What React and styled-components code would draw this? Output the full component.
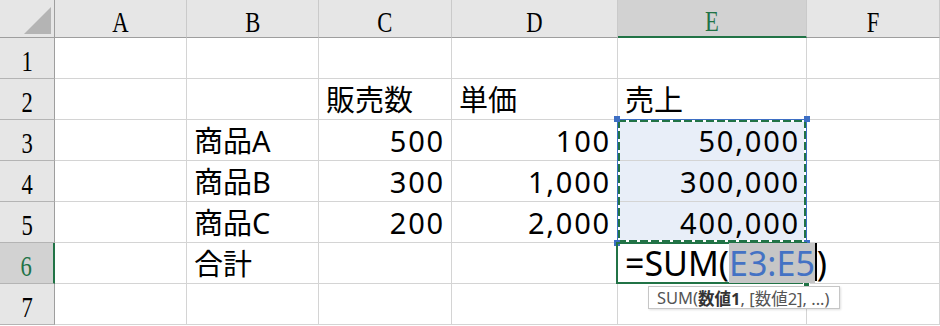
import React from "react";
import styled, { createGlobalStyle } from "styled-components";

const GlobalStyle = createGlobalStyle`
  html, body {
    margin: 0;
    padding: 0;
    background: #ffffff;
  }
  body {
    overflow: hidden;
  }
`;

const GREEN = "#217346";
const BLUE = "#3e6fc4";
const GRID = "#d4d4d4";
const CELL_FONT = `"Noto Sans", "Noto Sans CJK JP", sans-serif`;

const Sheet = styled.div`
  display: grid;
  grid-template-columns: 55px 132px 132px 133px 166px 189px 1fr;
  grid-template-rows: 38px repeat(7, 41px);
  width: 940px;
  height: 326px;
  overflow: hidden;
  background: #ffffff;
`;

// every grid item gets its own row/column so the overlays don't push cells around
const HeaderBase = styled.div`
  grid-row: ${(p) => p.$row};
  grid-column: ${(p) => p.$col};
  box-sizing: border-box;
  display: flex;
  justify-content: center;
  align-items: flex-end;
  font-family: "Liberation Serif", "Times New Roman", serif;
  font-size: 29px;
  line-height: 29px;
  background: ${(p) => (p.$selected ? "#d2d2d2" : "#e6e6e6")};
  color: ${(p) => (p.$selected ? GREEN : "#000000")};
`;

const Corner = styled(HeaderBase)`
  border-right: 1px solid #9e9e9e;
  border-bottom: 1px solid #9e9e9e;
  align-items: stretch;
`;

const ColHeader = styled(HeaderBase)`
  border-right: 1px solid #cacaca;
  border-bottom: ${(p) => (p.$selected ? `2px solid ${GREEN}` : "1px solid #9e9e9e")};
`;

const RowHeader = styled(HeaderBase)`
  padding-bottom: 2px;
  border-bottom: 1px solid #b4b4b4;
  border-right: ${(p) => (p.$selected ? `2px solid ${GREEN}` : "1px solid #9e9e9e")};
`;

const Glyph = styled.span`
  display: inline-block;
  transform: scaleX(0.78);
`;

const Cell = styled.div`
  grid-row: ${(p) => p.$row};
  grid-column: ${(p) => p.$col};
  box-sizing: border-box;
  display: flex;
  align-items: flex-end;
  justify-content: ${(p) => (p.$numeric ? "flex-end" : "flex-start")};
  padding: 0 ${(p) => (p.$numeric ? "6px" : "8px")} 5px 7px;
  border-right: 1px solid ${GRID};
  border-bottom: 1px solid ${GRID};
  background: ${(p) => (p.$inRange ? "#e8eef8" : "#ffffff")};
  font-family: ${CELL_FONT};
  font-size: 29px;
  line-height: 29px;
  letter-spacing: ${(p) => (p.$numeric ? "1.8px" : "0")};
  color: #000000;
  white-space: nowrap;
`;

const RangeBox = styled.div`
  grid-column: 6;
  grid-row: 4 / 7;
  position: relative;
  z-index: 2;
  margin: -1px 0 0 -1px;
  border: 1px solid ${BLUE};
  pointer-events: none;
  background:
    repeating-linear-gradient(90deg, ${GREEN} 0 8px, #ffffff 8px 11px) top left / 100% 2px no-repeat,
    repeating-linear-gradient(90deg, ${GREEN} 0 8px, #ffffff 8px 11px) bottom left / 100% 2px no-repeat,
    repeating-linear-gradient(180deg, ${GREEN} 0 8px, #ffffff 8px 11px) top left / 2px 100% no-repeat,
    repeating-linear-gradient(180deg, ${GREEN} 0 8px, #ffffff 8px 11px) top right / 2px 100% no-repeat;
`;

const Handle = styled.span`
  position: absolute;
  width: 6px;
  height: 6px;
  background: ${BLUE};
  ${(p) => (p.$top ? "top: -4px;" : "bottom: -4px;")}
  ${(p) => (p.$left ? "left: -4px;" : "right: -4px;")}
`;

const ActiveBox = styled.div`
  grid-column: 6;
  grid-row: 7;
  position: relative;
  z-index: 3;

  &::before {
    content: "";
    position: absolute;
    top: -1px;
    left: -2px;
    right: 0;
    bottom: 0;
    border: 2px solid ${GREEN};
  }
`;

const FillHandle = styled.span`
  position: absolute;
  right: -3px;
  bottom: -3px;
  width: 5px;
  height: 5px;
  background: ${GREEN};
  border: 1px solid #ffffff;
`;

const Editor = styled.div`
  position: relative;
  z-index: 1;
  height: 40px;
  padding-left: 7px;
  font-family: ${CELL_FONT};
  font-size: 34px;
  line-height: 40px;
  white-space: nowrap;
  color: #000000;
`;

const RefText = styled.span`
  display: inline-block;
  height: 40px;
  background: #c6c6c6;
  color: #4472c4;
`;

const Caret = styled.span`
  display: inline-block;
  width: 0;
  height: 38px;
  border-left: 2px solid #000000;
  vertical-align: top;
`;

const Tooltip = styled.div`
  position: absolute;
  top: 43px;
  left: 30px;
  box-sizing: border-box;
  height: 23px;
  padding: 0 10px 0 8px;
  display: flex;
  align-items: center;
  background: #ffffff;
  border: 1px solid #c6c6c6;
  box-shadow: 1px 1px 2px rgba(0, 0, 0, 0.12);
  font-family: ${CELL_FONT};
  font-size: 16.5px;
  color: #555555;
  white-space: nowrap;
`;

const Strong = styled.b`
  color: #333333;
  font-weight: 700;
`;

const COLS = ["A", "B", "C", "D", "E", "F"];

const DATA = {
  2: { C: "販売数", D: "単価", E: "売上" },
  3: { B: "商品A", C: "500", D: "100", E: "50,000" },
  4: { B: "商品B", C: "300", D: "1,000", E: "300,000" },
  5: { B: "商品C", C: "200", D: "2,000", E: "400,000" },
  6: { B: "合計" },
};

const isNumber = (v) => /^[\d,]+$/.test(v || "");

export default function App() {
  const rows = [1, 2, 3, 4, 5, 6, 7];
  return (
    <>
      <GlobalStyle />
      <Sheet>
        <Corner $row={1} $col={1}>
          <svg width="54" height="37" viewBox="0 0 54 37">
            <polygon points="24,34 51,7 51,34" fill="#b4b4b4" />
          </svg>
        </Corner>
        {COLS.map((c, i) => (
          <ColHeader key={c} $row={1} $col={i + 2} $selected={c === "E"}>
            <Glyph>{c}</Glyph>
          </ColHeader>
        ))}
        {rows.map((r) => (
          <React.Fragment key={r}>
            <RowHeader $row={r + 1} $col={1} $selected={r === 6}>
              <Glyph>{r}</Glyph>
            </RowHeader>
            {COLS.map((c, i) => {
              const v = (DATA[r] || {})[c];
              return (
                <Cell
                  key={c}
                  $row={r + 1}
                  $col={i + 2}
                  $numeric={isNumber(v)}
                  $inRange={c === "E" && r >= 3 && r <= 5}
                >
                  {v}
                </Cell>
              );
            })}
          </React.Fragment>
        ))}
        <RangeBox>
          <Handle $top $left />
          <Handle $top />
          <Handle $left />
          <Handle />
        </RangeBox>
        <ActiveBox>
          <Editor>
            =SUM(<RefText>E3:E5</RefText>
            <Caret />)
          </Editor>
          <FillHandle />
          <Tooltip>
            SUM(<Strong>数値1</Strong>, [数値2], ...)
          </Tooltip>
        </ActiveBox>
      </Sheet>
    </>
  );
}
